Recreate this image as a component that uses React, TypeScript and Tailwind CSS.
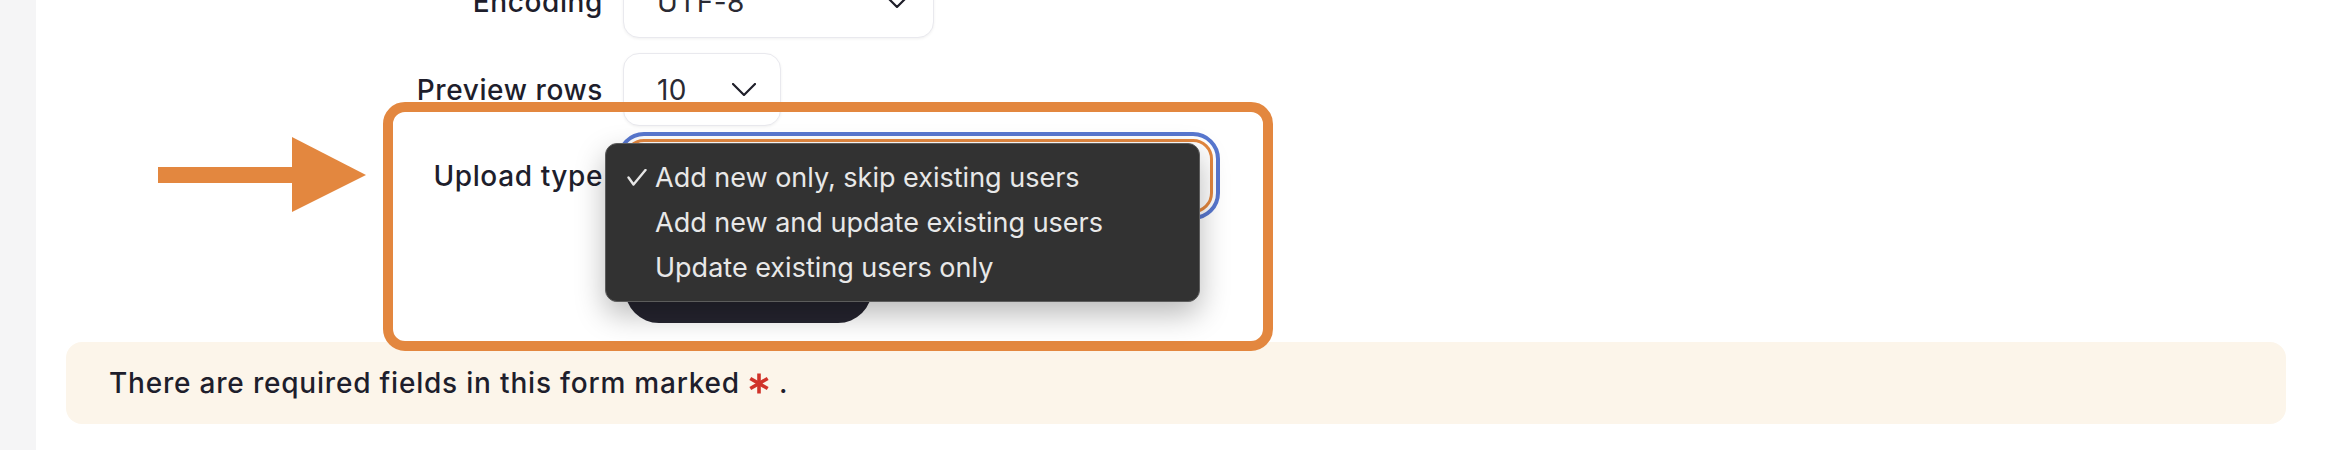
import React from "react";

function Chevron() {
  return (
    <svg width="24" height="13" viewBox="0 0 24 13" fill="none">
      <polyline points="1,1 12,12 23,1" stroke="#1f1f2a" strokeWidth="2.2" strokeLinecap="round" strokeLinejoin="round" />
    </svg>
  );
}

function Asterisk() {
  return (
    <svg width="20" height="21" viewBox="0 0 20 21" className="inline-block">
      <g stroke="#d0332a" strokeWidth="3.6" strokeLinecap="butt">
        <line x1="10" y1="0.5" x2="10" y2="20.5" />
        <line x1="1.3" y1="5.5" x2="18.7" y2="15.5" />
        <line x1="1.3" y1="15.5" x2="18.7" y2="5.5" />
      </g>
    </svg>
  );
}

function Check() {
  return (
    <svg width="20" height="17" viewBox="0 0 20 17" fill="none">
      <polyline points="1.5,8.5 6.5,15.5 18.5,1" stroke="#e6e6e6" strokeWidth="2.4" strokeLinecap="round" strokeLinejoin="round" />
    </svg>
  );
}

export default function App() {
  return (
    <div className="flex h-[450px] w-[2336px] overflow-hidden bg-white font-['Inter','Noto_Sans',sans-serif]">
      <div className="w-[36px] shrink-0 bg-[#f5f5f6]" />
      <div className="relative flex-1">
        <div className="mt-[-35px] flex flex-col">
          {/* Encoding */}
          <div className="flex h-[73px] items-center">
            <div className="w-[567px] text-right text-[28px] font-medium tracking-[0.6px] text-[#1e1e2c]">Encoding</div>
            <div className="ml-[20px] flex h-[73px] w-[311px] items-center justify-between rounded-[16px] border border-[#e9e9ee] bg-white pl-[33px] pr-[24px] text-[28px] tracking-[0.4px] text-[#2a2a33] shadow-[0_1px_3px_rgba(0,0,0,0.06)]">
              <span>UTF-8</span>
              <Chevron />
            </div>
          </div>
          {/* Preview rows */}
          <div className="mt-[15px] flex h-[73px] items-center">
            <div className="w-[567px] text-right text-[28px] font-medium tracking-[0.6px] text-[#1e1e2c]">Preview rows</div>
            <div className="ml-[20px] flex h-[73px] w-[158px] items-center justify-between rounded-[16px] border border-[#e9e9ee] bg-white pl-[33px] pr-[24px] text-[28px] tracking-[0.4px] text-[#2a2a33] shadow-[0_1px_3px_rgba(0,0,0,0.06)]">
              <span>10</span>
              <Chevron />
            </div>
          </div>
          {/* Upload type */}
          <div className="mt-[13px] flex h-[74px] items-center">
            <div className="w-[567px] text-right text-[28px] font-medium tracking-[0.6px] text-[#1e1e2c]">Upload type</div>
            <div className="ml-[21px] h-[74px] w-[589px] rounded-[20px] border-[3px] border-[#e3873f] bg-white outline-4 outline-offset-3 outline-[#5877cf]" />
          </div>
          {/* Button */}
          <div className="ml-[589px] mt-[42px] h-[68px] w-[247px] rounded-[34px] bg-[#25242f]" />
          {/* Notice */}
          <div className="ml-[30px] mr-[50px] mt-[19px] flex h-[82px] items-center rounded-[16px] bg-[#fcf5ea] pl-[43px] text-[28px] font-medium tracking-[0.8px] text-[#1e1e2c]">
            <span>There are required fields in this form marked</span>
            <span className="ml-[9px] flex items-center">
              <Asterisk />
            </span>
            <span className="ml-[10px]">.</span>
          </div>
        </div>

        {/* Annotation arrow */}
        <svg className="absolute left-[122px] top-[137px]" width="210" height="76" viewBox="0 0 210 76">
          <rect x="0" y="30" width="136" height="16" fill="#e3873f" />
          <polygon points="134,0 208,38 134,75" fill="#e3873f" />
        </svg>

        {/* Annotation box */}
        <div className="absolute left-[347px] top-[102px] h-[249px] w-[890px] rounded-[22px] border-[10px] border-[#e3873f]" />

        {/* Native popup menu */}
        <div className="absolute left-[569px] top-[143px] h-[159px] w-[595px] rounded-[12px] border border-[#5c5c5c] bg-[#323232] pt-[11px] text-[27px] text-[#e8e8e8] shadow-[0_12px_30px_rgba(0,0,0,0.28)]">
          <div className="flex h-[45px] items-center">
            <div className="ml-[21px] w-[28px]">
              <Check />
            </div>
            <span className="leading-[45px]">Add new only, skip existing users</span>
          </div>
          <div className="flex h-[45px] items-center">
            <div className="ml-[21px] w-[28px]" />
            <span className="leading-[45px]">Add new and update existing users</span>
          </div>
          <div className="flex h-[45px] items-center">
            <div className="ml-[21px] w-[28px]" />
            <span className="leading-[45px]">Update existing users only</span>
          </div>
        </div>
      </div>
    </div>
  );
}
